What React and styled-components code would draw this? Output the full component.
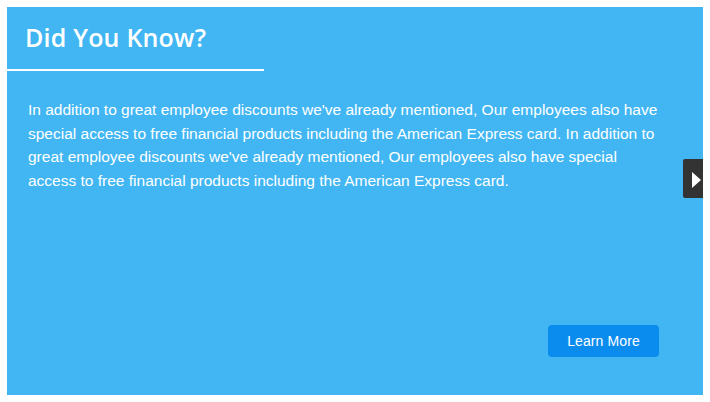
import React from 'react';
import styled, { createGlobalStyle } from 'styled-components';

const GlobalStyle = createGlobalStyle`
  html, body {
    margin: 0;
    padding: 0;
    background: #ffffff;
  }
  body {
    font-family: "Liberation Sans", Arial, sans-serif;
  }
`;

const Page = styled.div`
  padding: 7px;
  width: 696px;
`;

const Panel = styled.section`
  position: relative;
  display: flex;
  flex-direction: column;
  height: 388px;
  background: #41b6f3;
  color: #ffffff;
  box-sizing: border-box;
`;

const Header = styled.div`
  width: 239px;
  padding: 14px 0 0 18px;
  height: 48px;
  box-sizing: content-box;
  border-bottom: 2px solid #ffffff;
`;

const Title = styled.h2`
  margin: 0;
  font-family: "Open Sans", "Noto Sans", sans-serif;
  font-weight: 600;
  font-size: 25px;
  line-height: 32px;
  letter-spacing: 0.2px;
`;

const Body = styled.p`
  margin: 0;
  padding: 27px 37px 0 21px;
  font-size: 15.5px;
  line-height: 23.6px;
`;

const Footer = styled.div`
  margin-top: auto;
  display: flex;
  justify-content: flex-end;
  padding: 0 44px 38px 0;
`;

const Button = styled.button`
  width: 111px;
  height: 32px;
  border: 0;
  border-radius: 4px;
  background: #0a8cef;
  color: #ffffff;
  font-family: "Liberation Sans", Arial, sans-serif;
  font-size: 14px;
  font-weight: 400;
  letter-spacing: 0.1px;
  cursor: pointer;
`;

const NextTab = styled.button`
  position: absolute;
  right: 0;
  top: 152px;
  width: 20px;
  height: 39px;
  padding: 2px 2px 0 0;
  border: 0;
  border-radius: 2px 0 0 2px;
  background: #333333;
  display: flex;
  align-items: center;
  justify-content: flex-end;
  cursor: pointer;
`;

const Arrow = styled.span`
  display: block;
  width: 0;
  height: 0;
  border-top: 8px solid transparent;
  border-bottom: 8px solid transparent;
  border-left: 9px solid #ffffff;
`;

const text =
  "In addition to great employee discounts we've already mentioned, Our employees also have special access to free financial products including the American Express card. In addition to great employee discounts we've already mentioned, Our employees also have special access to free financial products including the American Express card.";

export default function App() {
  return (
    <Page>
      <GlobalStyle />
      <Panel>
        <Header>
          <Title>Did You Know?</Title>
        </Header>
        <Body>{text}</Body>
        <Footer>
          <Button>Learn More</Button>
        </Footer>
        <NextTab aria-label="Next">
          <Arrow />
        </NextTab>
      </Panel>
    </Page>
  );
}
